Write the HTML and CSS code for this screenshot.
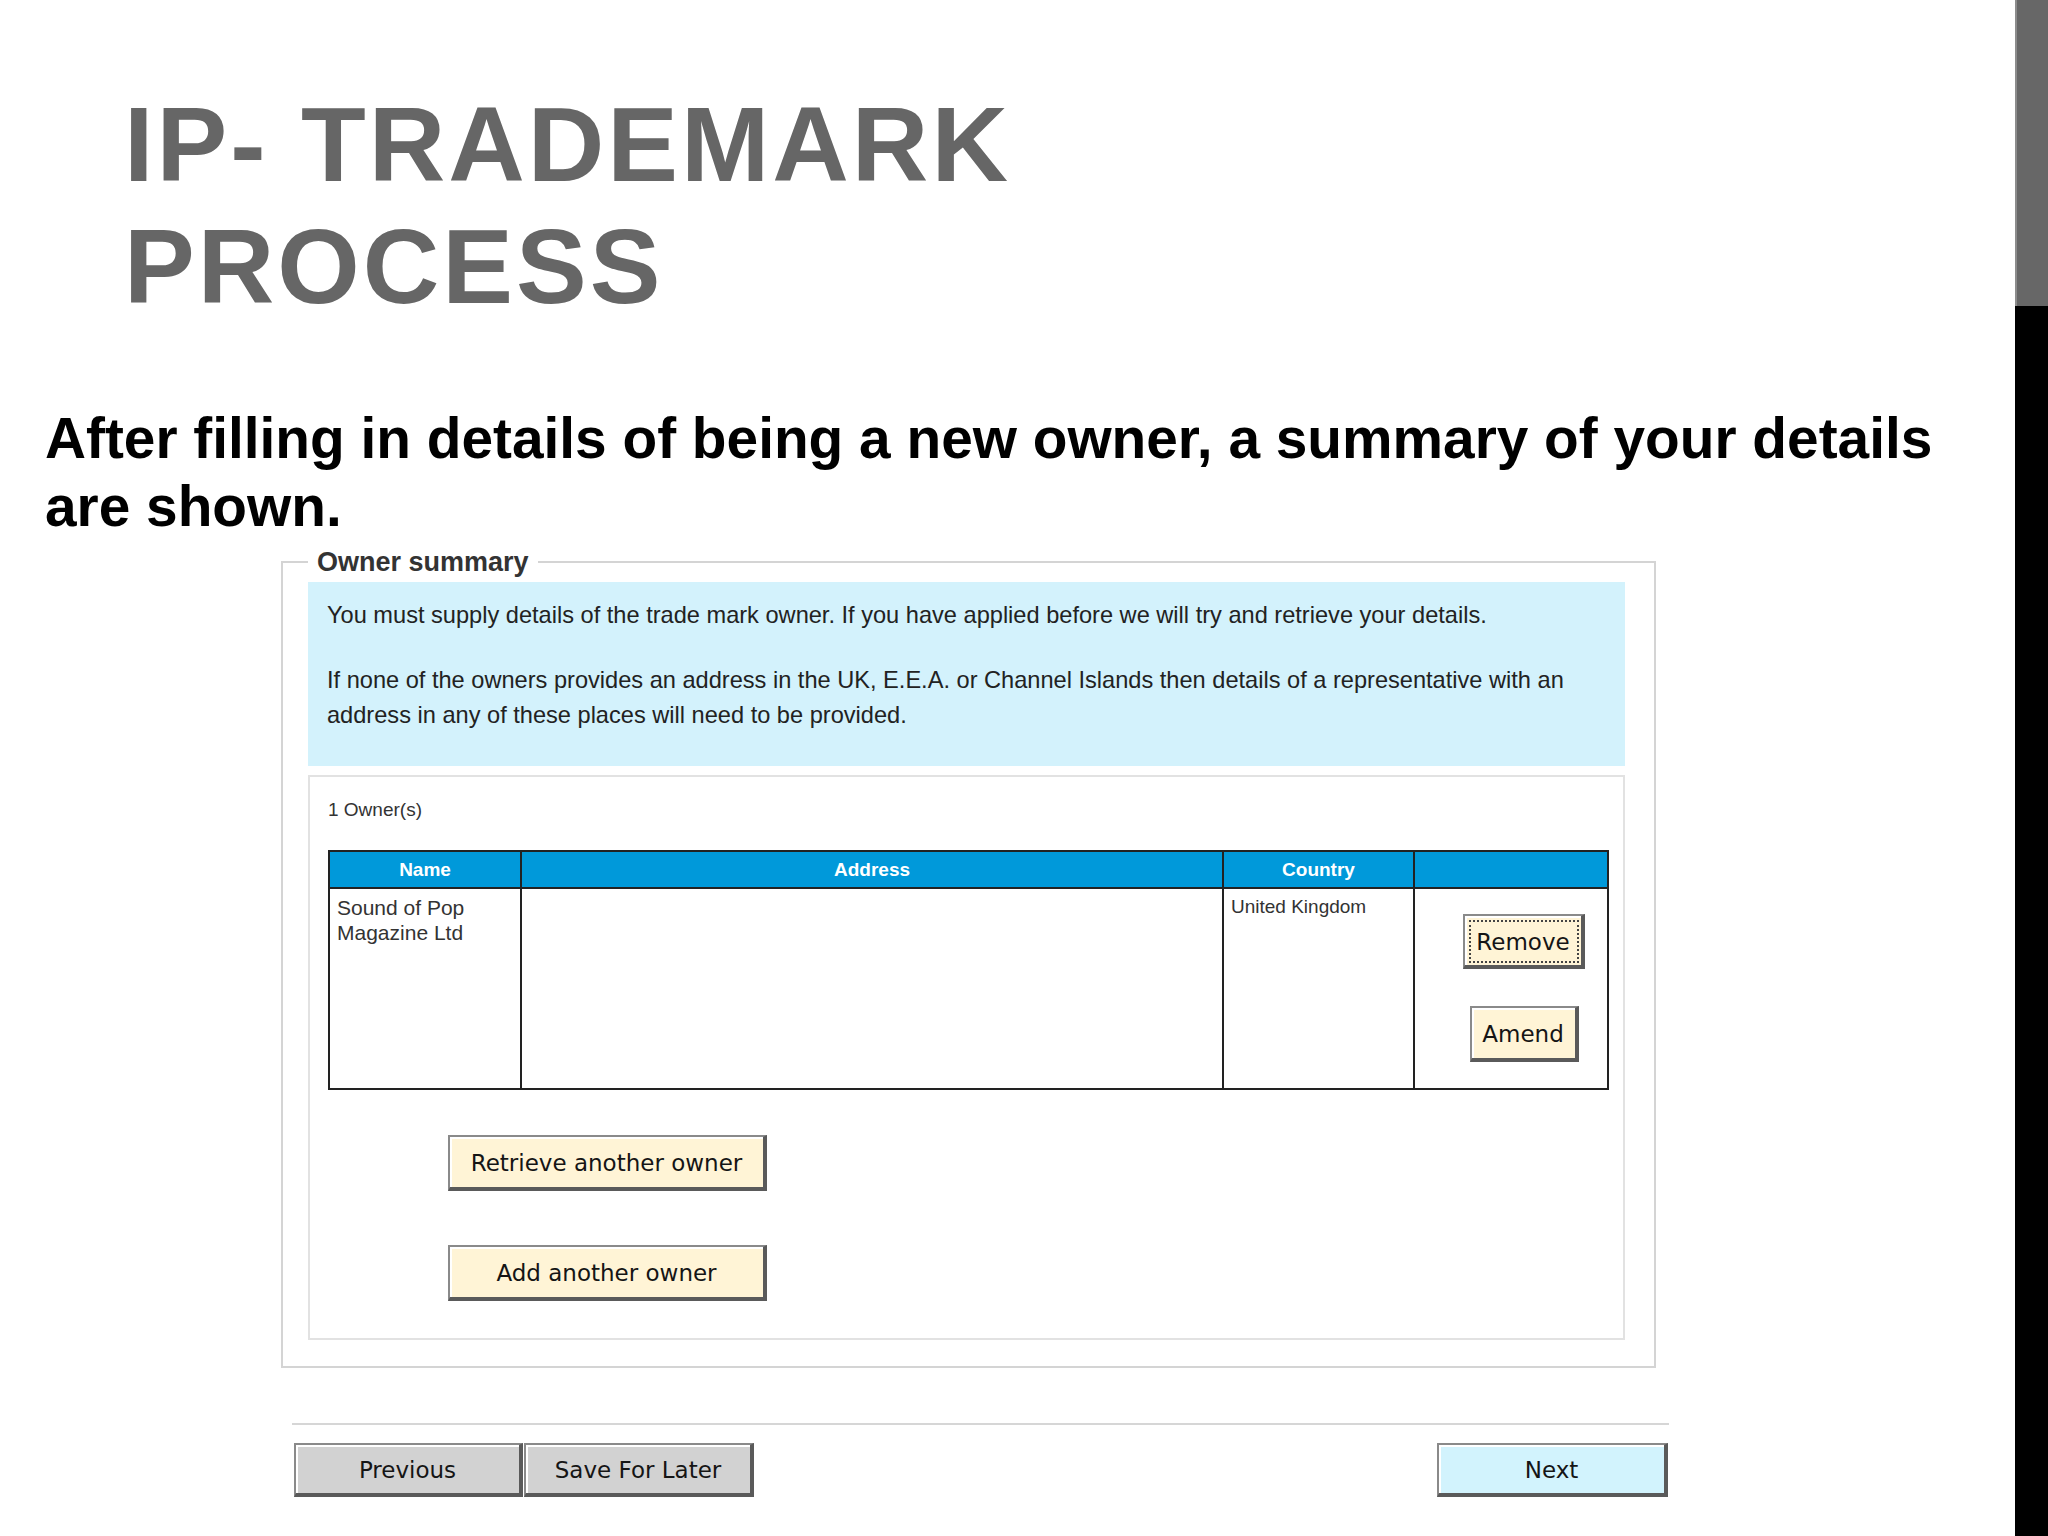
FILE: index.html
```html
<!DOCTYPE html>
<html lang="en">
<head>
<meta charset="utf-8">
<title>IP- Trademark Process</title>
<link rel="stylesheet" href="styles.css">
</head>
<body>
<div class="slide">
  <div class="main">
    <h1 class="title">IP- TRADEMARK<br>PROCESS</h1>
    <p class="lead">After filling in details of being a new owner, a summary of your details are shown.</p>

    <div class="form-area">
      <fieldset class="summary">
        <legend>Owner summary</legend>
        <div class="intro">
          <p>You must supply details of the trade mark owner. If you have applied before we will try and retrieve your details.</p>
          <p class="gap">If none of the owners provides an address in the UK, E.E.A. or Channel Islands then details of a representative with an address in any of these places will need to be provided.</p>
        </div>

        <div class="owners">
          <div class="count">1 Owner(s)</div>
          <table class="owner-table">
            <colgroup>
              <col class="c-name">
              <col class="c-address">
              <col class="c-country">
              <col class="c-actions">
            </colgroup>
            <thead>
              <tr>
                <th>Name</th>
                <th>Address</th>
                <th>Country</th>
                <th></th>
              </tr>
            </thead>
            <tbody>
              <tr>
                <td class="name-cell">Sound of Pop<br>Magazine Ltd</td>
                <td></td>
                <td class="country-cell">United Kingdom</td>
                <td class="action-cell">
                  <div class="row-actions">
                    <button class="btn btn-remove" type="button">Remove</button>
                    <button class="btn btn-amend" type="button">Amend</button>
                  </div>
                </td>
              </tr>
            </tbody>
          </table>
          <div class="owner-actions">
            <button class="btn btn-wide" type="button">Retrieve another owner</button>
            <button class="btn btn-wide" type="button">Add another owner</button>
          </div>
        </div>
      </fieldset>

      <div class="nav">
        <button class="btn btn-grey btn-prev" type="button">Previous</button>
        <button class="btn btn-grey btn-save" type="button">Save For Later</button>
        <button class="btn btn-next" type="button">Next</button>
      </div>
    </div>
  </div>
  <div class="sidebar">
    <div class="sidebar-top"></div>
    <div class="sidebar-bottom"></div>
  </div>
</div>
</body>
</html>
```

FILE: styles.css
```css
* { box-sizing: border-box; }

html, body {
  margin: 0;
  padding: 0;
}

body {
  width: 2048px;
  height: 1536px;
  overflow: hidden;
  background: #ffffff;
  font-family: "Liberation Sans", Arial, sans-serif;
}

.slide {
  display: flex;
  width: 2048px;
  height: 1536px;
}

.main {
  flex: 1;
  min-width: 0;
}

.sidebar {
  width: 33px;
  display: flex;
  flex-direction: column;
}

.sidebar-top {
  height: 306px;
  background: #676767;
  border-left: 2px solid #8c8c8c;
}

.sidebar-bottom {
  flex: 1;
  background: #000000;
}

/* Slide title */
.title {
  margin: 83px 0 0 124px;
  font-size: 106px;
  line-height: 122px;
  font-weight: 700;
  color: #666666;
  letter-spacing: 3px;
}

.lead {
  margin: 78px 0 0 45px;
  width: 1930px;
  font-size: 56.8px;
  line-height: 68px;
  font-weight: 700;
  color: #000000;
}

/* Embedded form screenshot */
.form-area {
  margin: 6px 0 0 281px;
  width: 1375px;
}

.summary {
  margin: 0;
  border: 2px solid #d4d4d4;
  padding: 5px 29px 26px 25px;
  min-width: 0;
}

.summary legend {
  padding: 0 9px 0 9px;
  font-size: 27px;
  line-height: 30px;
  font-weight: 700;
  color: #333333;
}

.intro {
  background: #d3f2fc;
  padding: 16px 19px 33px 19px;
  color: #222222;
  font-size: 23.6px;
  line-height: 35px;
}

.intro p {
  margin: 0;
}

.intro p.gap {
  margin-top: 30px;
}

.owners {
  margin-top: 9px;
  border: 2px solid #e2e2e2;
  padding: 22px 17px 37px 18px;
}

.count {
  font-size: 19px;
  line-height: 22px;
  color: #333333;
}

.owner-table {
  margin-top: 29px;
  width: 100%;
  border-collapse: collapse;
  table-layout: fixed;
}

.c-name { width: 192px; }
.c-address { width: 702px; }
.c-country { width: 191px; }
.c-actions { width: 194px; }

.owner-table th {
  height: 37px;
  padding: 0;
  background: #0099da;
  color: #ffffff;
  font-size: 19px;
  font-weight: 700;
  text-align: center;
  border: 2px solid #222222;
}

.owner-table td {
  height: 201px;
  padding: 0;
  vertical-align: top;
  border: 2px solid #222222;
  color: #333333;
}

.name-cell {
  padding: 6px 7px 0 7px !important;
  font-size: 21px;
  line-height: 25px;
}

.country-cell {
  padding: 7px 7px 0 7px !important;
  font-size: 19px;
  line-height: 22px;
}

.action-cell {
  padding: 25px 0 0 0 !important;
}

.row-actions {
  display: flex;
  flex-direction: column;
  align-items: center;
  gap: 37px;
  padding-left: 26px;
}

/* Buttons */
.btn {
  display: flex;
  align-items: center;
  justify-content: center;
  margin: 0;
  padding: 2px 0 0 0;
  font-family: "DejaVu Sans", Verdana, sans-serif;
  font-size: 23px;
  color: #151515;
  background: #fff4d6;
  border-style: solid;
  border-width: 2px 4px 4px 2px;
  border-color: #8a8a8a #5a5a5a #5a5a5a #8a8a8a;
  box-shadow: inset 2px 2px 0 #ffffff;
  border-radius: 0;
}

.btn-remove {
  width: 122px;
  height: 55px;
  outline: 2px dotted #444444;
  outline-offset: -8px;
}

.btn-amend {
  width: 109px;
  height: 56px;
}

.owner-actions {
  margin-top: 45px;
  padding-left: 120px;
  display: flex;
  flex-direction: column;
  align-items: flex-start;
  gap: 54px;
}

.btn-wide {
  width: 319px;
  height: 56px;
}

.nav {
  margin: 55px 0 0 11px;
  width: 1377px;
  border-top: 2px solid #d6d6d6;
  padding: 18px 1px 0 2px;
  display: flex;
  align-items: flex-start;
}

.btn-grey {
  height: 54px;
  background: #d2d2d2;
}

.btn-prev { width: 229px; }
.btn-save { width: 230px; margin-left: 1px; }

.btn-next {
  margin-left: auto;
  width: 231px;
  height: 54px;
  background: #d2f3fd;
}
```
